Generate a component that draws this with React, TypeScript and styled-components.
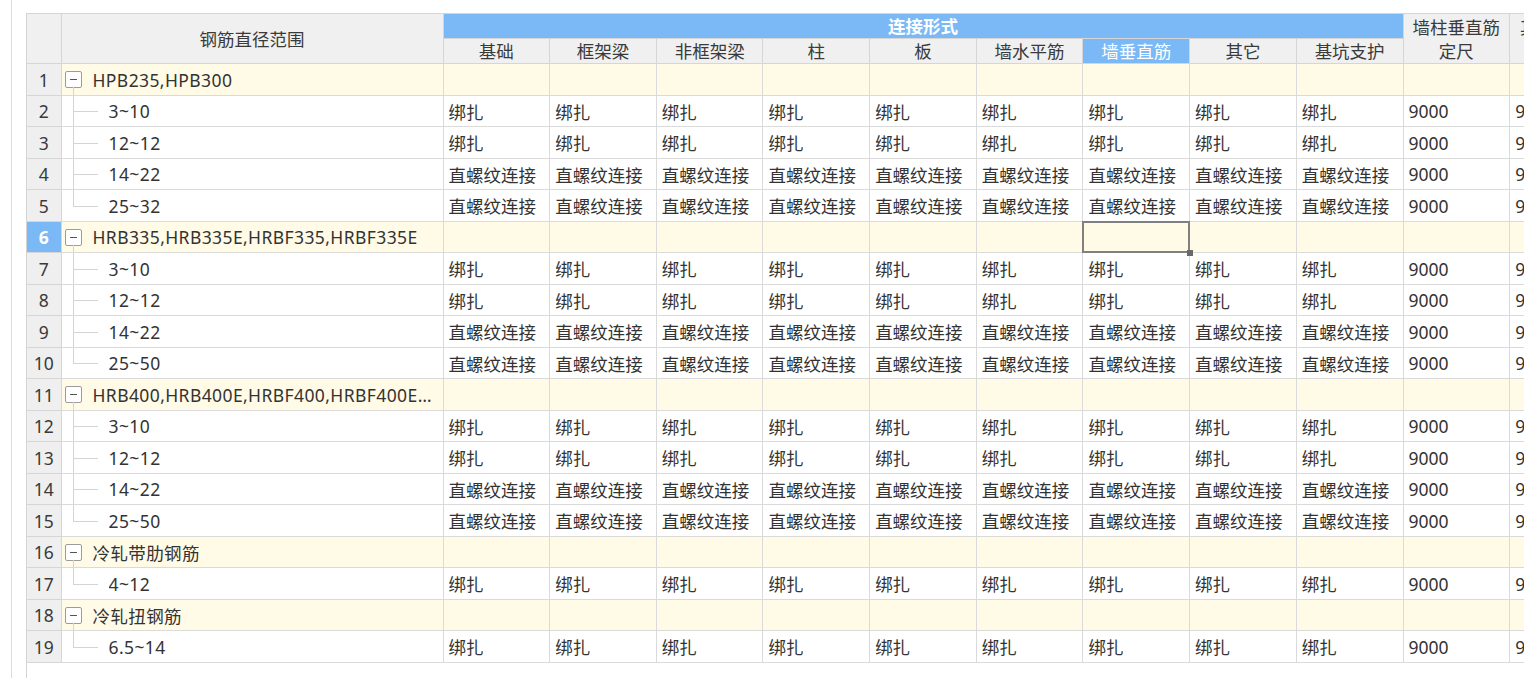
import React from 'react';
import styled, { createGlobalStyle } from 'styled-components';

const GlobalStyle = createGlobalStyle`
  html, body { margin: 0; padding: 0; background: #fff; overflow: hidden; }
  body {
    font-family: "Noto Sans", "Noto Sans CJK SC", sans-serif;
    font-size: 17.5px;
    color: #333;
  }
`;

const Page = styled.div`
  width: 1524px;
  height: 678px;
  overflow: hidden;
  box-sizing: border-box;
  padding-left: 11px;
  display: flex;
`;

const Panel = styled.div`
  flex: 1;
  min-width: 0;
  display: flex;
  border-left: 1px solid #dcdcdc;
  padding: 13px 0 0 14px;
`;

const GridArea = styled.div`
  flex: 1;
  min-width: 0;
  overflow: hidden;
  border-left: 1px solid #d4d4d4;
`;

const Table = styled.table`
  border-collapse: collapse;
  table-layout: fixed;
  width: 1590px;
`;

const HeadRow = styled.tr<{ $h: number }>`
  height: ${(p) => p.$h}px;
`;

const BodyRow = styled.tr<{ $h: number }>`
  height: ${(p) => p.$h}px;
`;

const Th = styled.th<{ $blue?: boolean; $strong?: boolean }>`
  background: ${(p) => (p.$blue ? '#7bb9f6' : '#f0f0f0')};
  color: ${(p) => (p.$blue ? '#fff' : '#3a3a3a')};
  font-weight: ${(p) => (p.$strong ? 600 : 400)};
  border: 1px solid #d6d6d6;
  padding: 0 4px;
  text-align: center;
  white-space: nowrap;
  overflow: hidden;
  line-height: 24px;
  &:first-child { border-left: none; }
`;

const RowNum = styled.td<{ $active?: boolean }>`
  background: ${(p) => (p.$active ? '#7bb9f6' : '#efefef')};
  color: ${(p) => (p.$active ? '#fff' : '#3a3a3a')};
  font-weight: ${(p) => (p.$active ? 700 : 400)};
  border: 1px solid #d6d6d6;
  border-left: none;
  text-align: center;
  padding: 0;
`;

const NameCell = styled.td<{ $group?: boolean }>`
  background: ${(p) => (p.$group ? '#fffbe7' : '#fff')};
  border: 1px solid #dadada;
  padding: 0;
  overflow: hidden;
`;

const NameInner = styled.div<{ $h: number }>`
  display: flex;
  align-items: center;
  height: ${(p) => p.$h - 1}px;
  padding-left: 3px;
  letter-spacing: 0.4px;
`;

const Toggle = styled.span`
  position: relative;
  flex-shrink: 0;
  width: 17px;
  height: 17px;
  box-sizing: border-box;
  border: 1px solid #9c9c9c;
  border-radius: 2px;
  background: #fff;
  margin-right: 11px;
  &::before {
    content: '';
    position: absolute;
    left: 4px;
    top: 7px;
    width: 7px;
    height: 1px;
    background: #555;
  }
  &::after {
    content: '';
    position: absolute;
    left: 7px;
    top: 100%;
    width: 1px;
    height: 8px;
    background: #d4d4d4;
  }
`;

const Label = styled.span`
  flex: 1;
  min-width: 0;
  white-space: nowrap;
  overflow: hidden;
  text-overflow: ellipsis;
  padding-right: 8px;
`;

const Connector = styled.span<{ $last?: boolean }>`
  position: relative;
  align-self: stretch;
  flex-shrink: 0;
  width: 44px;
  &::before {
    content: '';
    position: absolute;
    left: 8px;
    top: 0;
    bottom: ${(p) => (p.$last ? '50%' : '-1px')};
    width: 1px;
    background: #d4d4d4;
  }
  &::after {
    content: '';
    position: absolute;
    left: 8px;
    top: 50%;
    width: 25px;
    height: 1px;
    background: #d4d4d4;
  }
`;

const Td = styled.td<{ $group?: boolean; $selected?: boolean }>`
  position: ${(p) => (p.$selected ? 'relative' : 'static')};
  background: ${(p) => (p.$group ? '#fffbe7' : '#fff')};
  border: 1px solid #dadada;
  padding: 0 5px;
  white-space: nowrap;
  overflow: ${(p) => (p.$selected ? 'visible' : 'hidden')};
`;

const SelectionFrame = styled.span`
  position: absolute;
  left: -1px;
  top: -1px;
  right: -1px;
  bottom: -1px;
  border: 2px solid #808080;
  pointer-events: none;
  z-index: 2;
  &::after {
    content: '';
    position: absolute;
    right: -5px;
    bottom: -5px;
    width: 6px;
    height: 6px;
    background: #6a6a6a;
  }
`;

type Row =
  | { kind: 'group'; label: string }
  | { kind: 'item'; label: string; conn: string; last?: boolean };

const BIND = '绑扎';
const SCREW = '直螺纹连接';

const rows: Row[] = [
  { kind: 'group', label: 'HPB235,HPB300' },
  { kind: 'item', label: '3~10', conn: BIND },
  { kind: 'item', label: '12~12', conn: BIND },
  { kind: 'item', label: '14~22', conn: SCREW },
  { kind: 'item', label: '25~32', conn: SCREW, last: true },
  { kind: 'group', label: 'HRB335,HRB335E,HRBF335,HRBF335E' },
  { kind: 'item', label: '3~10', conn: BIND },
  { kind: 'item', label: '12~12', conn: BIND },
  { kind: 'item', label: '14~22', conn: SCREW },
  { kind: 'item', label: '25~50', conn: SCREW, last: true },
  { kind: 'group', label: 'HRB400,HRB400E,HRBF400,HRBF400E,RRB400' },
  { kind: 'item', label: '3~10', conn: BIND },
  { kind: 'item', label: '12~12', conn: BIND },
  { kind: 'item', label: '14~22', conn: SCREW },
  { kind: 'item', label: '25~50', conn: SCREW, last: true },
  { kind: 'group', label: '冷轧带肋钢筋' },
  { kind: 'item', label: '4~12', conn: BIND, last: true },
  { kind: 'group', label: '冷轧扭钢筋' },
  { kind: 'item', label: '6.5~14', conn: BIND, last: true },
];

const subHeads = ['基础', '框架梁', '非框架梁', '柱', '板', '墙水平筋', '墙垂直筋', '其它', '基坑支护'];
const ACTIVE_COL = 6;
const ACTIVE_ROW = 5;
const DATA_COL = 106.67;

export default function App() {
  return (
    <>
      <GlobalStyle />
      <Page>
        <Panel>
          <GridArea>
            <Table>
              <colgroup>
                <col style={{ width: 34 }} />
                <col style={{ width: 382 }} />
                {Array.from({ length: 10 }).map((_, i) => (
                  <col key={i} style={{ width: DATA_COL }} />
                ))}
                <col style={{ width: 108 }} />
              </colgroup>
              <thead>
                <HeadRow $h={25}>
                  <Th rowSpan={2} />
                  <Th rowSpan={2}>钢筋直径范围</Th>
                  <Th colSpan={9} $blue $strong>
                    连接形式
                  </Th>
                  <Th rowSpan={2}>
                    墙柱垂直筋
                    <br />
                    定尺
                  </Th>
                  <Th rowSpan={2}>
                    其它钢筋定
                    <br />
                    尺
                  </Th>
                </HeadRow>
                <HeadRow $h={24}>
                  {subHeads.map((h, i) => (
                    <Th key={h} $blue={i === ACTIVE_COL}>
                      {h}
                    </Th>
                  ))}
                </HeadRow>
              </thead>
              <tbody>
                {rows.map((r, ri) => {
                  const group = r.kind === 'group';
                  const h = ri % 2 === 0 ? 32 : 31;
                  return (
                    <BodyRow key={ri} $h={h}>
                      <RowNum $active={ri === ACTIVE_ROW}>{ri + 1}</RowNum>
                      <NameCell $group={group}>
                        <NameInner $h={h}>
                          {group ? <Toggle /> : <Connector $last={r.kind === 'item' && r.last} />}
                          <Label>{r.label}</Label>
                        </NameInner>
                      </NameCell>
                      {subHeads.map((_, ci) => {
                        const selected = ri === ACTIVE_ROW && ci === ACTIVE_COL;
                        return (
                          <Td key={ci} $group={group} $selected={selected}>
                            {r.kind === 'item' ? r.conn : null}
                            {selected ? <SelectionFrame /> : null}
                          </Td>
                        );
                      })}
                      <Td $group={group}>{r.kind === 'item' ? '9000' : null}</Td>
                      <Td $group={group}>{r.kind === 'item' ? '9000' : null}</Td>
                    </BodyRow>
                  );
                })}
              </tbody>
            </Table>
          </GridArea>
        </Panel>
      </Page>
    </>
  );
}
